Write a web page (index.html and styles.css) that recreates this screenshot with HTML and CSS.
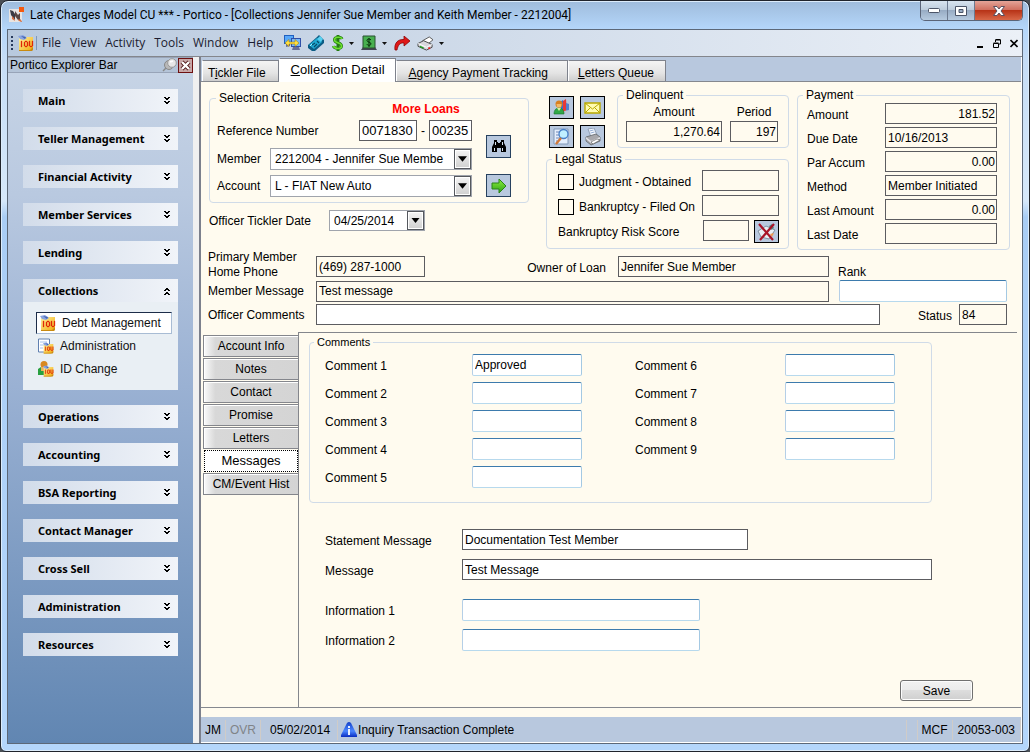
FILE: index.html
```html
<!DOCTYPE html>
<html lang="en">
<head>
<meta charset="utf-8">
<title>Portico - Collections</title>
<link rel="stylesheet" href="styles.css">
</head>
<body>
<svg class="defs" aria-hidden="true">
  <defs>
    <linearGradient id="gold" x1="0" y1="0" x2="1" y2="1"><stop offset="0" stop-color="#fff3a0"/><stop offset="1" stop-color="#f0a808"/></linearGradient>
    <linearGradient id="alert" x1="0" y1="0" x2="0" y2="1"><stop offset="0" stop-color="#1440c8"/><stop offset=".6" stop-color="#4a86ff"/><stop offset="1" stop-color="#0a2cc0"/></linearGradient>
    <linearGradient id="lime" x1="0" y1="0" x2="0" y2="1"><stop offset="0" stop-color="#8cf03c"/><stop offset="1" stop-color="#2ea018"/></linearGradient>
    <symbol id="down" viewBox="0 0 6 8"><path d="M0 0h2v1h2V0h2v1H5v1H4v1H2V2H1V1H0zM0 4h2v1h2V4h2v1H5v1H4v1H2V6H1V5H0z" fill="#000"/></symbol>
    <symbol id="iou" viewBox="0 0 16 16"><path d="M1 2h14v11l-3 3H1z" fill="url(#gold)"/><path d="M1 15h11l3-3v3l-1 1H1z" fill="#c88a10"/><path d="M0 1l5-1 4 3-3 2-4-1z" fill="#8aa4e0"/><path d="M3 1l5 1-1 2z" fill="#4464b0"/><path d="M3 6h1v6H3zM7 6h2v1H7zM6 7h1v4H6zM9 7h1v4H9zM7 11h2v1H7zM11 6h1v5h-1zM14 6h1v5h-1zM12 11h2v1h-2z" fill="#e02808" stroke="#e02808" stroke-width=".3"/></symbol>
    <symbol id="printer" viewBox="0 0 18 18"><path d="M4 1l6-1 3 7-6 2z" fill="#f4f8ff" stroke="#8090a8" stroke-width=".8"/><path d="M5.500 3l4-1M6.500 5l4-1" stroke="#7090c0" stroke-width=".7"/><path d="M2 9l10-3 4 3v4l-9 4-5-4z" fill="#a8a8ac" stroke="#606468" stroke-width=".8"/><path d="M2 9l5 4 9-4v2l-9 4-5-4z" fill="#e2e2e6"/><path d="M7 14l6-3 3 1-7 4z" fill="#fff" stroke="#555" stroke-width=".6"/></symbol>
    <symbol id="drop" viewBox="0 0 5 3"><path d="M0 0h5L2.500 3z" fill="#111"/></symbol>
    <symbol id="combo" viewBox="0 0 8 5"><path d="M0 0h8L4 5z" fill="#000"/></symbol>
  </defs>
</svg>
<div class="window">
  <header class="titlebar">
    <svg class="i16" viewBox="0 0 16 16"><path d="M1 2h13v13H1z" fill="#e8e4e2"/><path d="M2 3l3 1 2 3v6L5 11 3 8z" fill="#3c3b44"/><path d="M7 4l3 4 2-2v6l2 3-4-2-3-4z" fill="#5b4642"/><path d="M4 9l2 2 1 3-3-2zM10 12l3 1 1 2-3-1z" fill="#e07040"/><path d="M11 0h5v5h-5z" fill="#f45a10"/></svg>
    <h1>Late Charges Model CU *** - Portico - [Collections Jennifer Sue Member and Keith Member - 2212004]</h1>
    <div class="winbtns">
      <button class="wb" aria-label="Minimize"><svg width="12" height="6" viewBox="0 0 12 6"><rect x=".5" y=".5" width="11" height="4" rx="1" fill="#fff" stroke="#4c5568"/></svg></button>
      <button class="wb" aria-label="Maximize"><svg width="12" height="10" viewBox="0 0 12 10"><path fill-rule="evenodd" d="M.5.5h11v9H.5zM4 3.500h4v3H4z" fill="#fff" stroke="#4c5568"/></svg></button>
      <button class="wb close" aria-label="Close"><svg width="12" height="10" viewBox="0 0 12 10"><path d="M.5.500h3.500l2 2.500 2-2.500h3.500L8 5l3.500 4.500H8L6 7 4 9.500H.5L4 5z" fill="#fff" stroke="#5a5060"/></svg></button>
    </div>
  </header>
  <div class="client">
    <nav class="menubar">
      <span class="grip"></span>
      <svg class="i16"><use href="#iou"/></svg>
      <span class="rule"></span>
      <button>File</button><button>View</button><button>Activity</button><button>Tools</button><button>Window</button><button>Help</button>
      <div class="tools">
        <button aria-label="Connect"><svg width="17" height="16" viewBox="0 0 17 16"><path d="M0 0h10v9H0z" fill="#2060c0"/><path d="M1 1h8v7H1z" fill="#58a8f8"/><path d="M7 3h10v9H7z" fill="#3050a8"/><path d="M8 4h8v7H8z" fill="#78b8f8"/><path d="M2 9h4v2l-4 1zM9 12h6l1 3H8z" fill="#687098"/><path d="M1 8l4-3.500V7h6V4.500L15 8l-4 3.500V9H5v2.500z" fill="#ffe040" stroke="#987000" stroke-width=".5"/></svg></button>
        <button aria-label="Phone"><svg width="17" height="16" viewBox="0 0 17 16"><path d="M0 10L9 2l2-2 5 5v3L7 16H4L0 13z" fill="#0c5c84"/><path d="M1 10l8-7 5 4-8 7z" fill="#20a8d0"/><path d="M9 4l3-3 3 3-2 3z" fill="#58d0f0"/><path d="M4 10l3-2M6 12l3-3M9 6l2 2" stroke="#064868" stroke-width="1.200"/><path d="M2 11l2-2" stroke="#a0f0ff"/></svg></button>
        <button class="split" aria-label="Cash"><svg width="12" height="16" viewBox="0 0 12 16"><path d="M10 4C9 1.500 2.500 1.500 2.500 5S9.500 7 9.500 11 2 13.500 1.500 11M6 0v16" fill="none" stroke="#237c10" stroke-width="3"/><path d="M10 4C9 1.500 2.500 1.500 2.500 5S9.500 7 9.500 11 2 13.500 1.500 11" fill="none" stroke="#6ce030" stroke-width="1.600"/></svg><svg class="dd"><use href="#drop"/></svg></button>
        <button class="split" aria-label="Account"><svg width="16" height="16" viewBox="0 0 16 16"><path d="M0 15l2-3h12l2 3z" fill="#445"/><path d="M2 1h12v12H2z" fill="#48b050" stroke="#285030"/><path d="M10 5C9 3.500 6 3.500 6 5.500S10.500 7 10 9 6 10.500 6 9M8 3v9" fill="none" stroke="#062c08"/></svg><svg class="dd"><use href="#drop"/></svg></button>
        <button aria-label="Go"><svg width="16" height="15" viewBox="0 0 16 15"><path d="M1 14C0 7 4 3 10 3.500V0l6 5-6 5V7C6 6.500 4 9 3 14z" fill="#e01818" stroke="#8c0808" stroke-width=".8"/></svg></button>
        <button class="split" aria-label="Print"><svg width="17" height="15" viewBox="0 0 18 16"><path d="M6 5l7-4 4 3-6 5z" fill="#fff" stroke="#555"/><path d="M1 8l6-3 9 4v3l-6 3-9-4z" fill="#d8d8dc" stroke="#444"/><path d="M1 8l9 4 6-3" fill="none" stroke="#fff"/><path d="M3 11l4 2" stroke="#20a020" stroke-width="1.500"/><path d="M12 12h2v2h-2z" fill="#e02020"/></svg><svg class="dd"><use href="#drop"/></svg></button>
      </div>
      <div class="mdi">
        <button aria-label="Minimize form"><svg width="8" height="9" viewBox="0 0 8 9"><path d="M1 7h6v2H1z"/></svg></button>
        <button aria-label="Restore form"><svg width="8" height="9" viewBox="0 0 8 9"><path d="M2.500 3V1h5v4H6M2.500 .5h5M.5 4.500h5v4h-5zM.5 4h5" fill="none" stroke="#000"/></svg></button>
        <button aria-label="Close form"><svg width="8" height="9" viewBox="0 0 8 9"><path d="M.5 1l7 7M7.500 1l-7 7" stroke="#000" stroke-width="1.600"/></svg></button>
      </div>
    </nav>
    <div class="body">
      <aside class="explorer">
        <div class="exhead"><span>Portico Explorer Bar</span>
          <svg width="15" height="14" viewBox="0 0 15 14"><path d="M1 13l4-4" stroke="#888" stroke-width="1.500"/><circle cx="7" cy="7" r="4.500" fill="#b8b8b8" stroke="#888"/><circle cx="10" cy="5" r="4.300" fill="#e6e6e6" stroke="#999"/><path d="M8 4l3-1" stroke="#fff" stroke-width="1.500"/></svg>
          <button aria-label="Close explorer"><svg width="15" height="15" viewBox="0 0 15 15"><rect x=".5" y=".5" width="14" height="14" fill="#c8a8a8" stroke="#6e1010"/><path d="M4 4l7 7M11 4l-7 7" stroke="#501818" stroke-width="4"/><path d="M4 4l7 7M11 4l-7 7" stroke="#fff" stroke-width="2.400"/></svg></button>
        </div>
        <div class="groups">
          <button class="grp">Main<svg><use href="#down"/></svg></button>
          <button class="grp">Teller Management<svg><use href="#down"/></svg></button>
          <button class="grp">Financial Activity<svg><use href="#down"/></svg></button>
          <button class="grp">Member Services<svg><use href="#down"/></svg></button>
          <button class="grp">Lending<svg><use href="#down"/></svg></button>
          <div class="open">
            <button class="grp">Collections<svg class="flip"><use href="#down"/></svg></button>
            <div class="links">
              <a href="#" class="current"><svg class="i16"><use href="#iou"/></svg>Debt Management</a>
              <a href="#"><svg class="i16" viewBox="0 0 16 16"><path d="M.5 1h11v13H.5z" fill="#fff" stroke="#6080b0"/><path d="M2 4h7M2 7h4M2 10h3" stroke="#a8c4ec"/><svg x="5" y="4" width="11" height="12"><use href="#iou"/></svg></svg>Administration</a>
              <a href="#"><svg class="i16" viewBox="0 0 16 16"><path d="M0 14V8l3-2h5v8z" fill="#28a040"/><circle cx="6" cy="3.500" r="3.500" fill="#d88820"/><path d="M3 6h6v4H3z" fill="#e8b060"/><svg x="5" y="4" width="11" height="12"><use href="#iou"/></svg></svg>ID Change</a>
            </div>
          </div>
          <button class="grp">Operations<svg><use href="#down"/></svg></button>
          <button class="grp">Accounting<svg><use href="#down"/></svg></button>
          <button class="grp">BSA Reporting<svg><use href="#down"/></svg></button>
          <button class="grp">Contact Manager<svg><use href="#down"/></svg></button>
          <button class="grp">Cross Sell<svg><use href="#down"/></svg></button>
          <button class="grp">Administration<svg><use href="#down"/></svg></button>
          <button class="grp">Resources<svg><use href="#down"/></svg></button>
        </div>
      </aside>
      <main class="main">
        <div class="tabs">
          <button>T<u>i</u>ckler File</button>
          <button class="active"><u>C</u>ollection Detail</button>
          <button><u>A</u>gency Payment Tracking</button>
          <button><u>L</u>etters Queue</button>
        </div>
        <form class="page">
          <div class="top">
            <div class="left">
              <fieldset class="selection"><legend>Selection Criteria</legend>
                <div class="selwrap">
                  <div class="rows">
                    <strong class="more">More Loans</strong>
                    <div class="row ref"><label for="ref">Reference Number</label><input id="ref" class="big" value="0071830"><span>-</span><input class="big small" aria-label="Reference suffix" value="00235"></div>
                    <div class="row mem"><label for="mem">Member</label><span class="combo"><select id="mem"><option>2212004 - Jennifer Sue Membe</option></select><svg><use href="#combo"/></svg></span></div>
                    <div class="row acc"><label for="acc">Account</label><span class="combo"><select id="acc"><option>L - FIAT New Auto</option></select><svg><use href="#combo"/></svg></span></div>
                  </div>
                  <div class="side">
                    <button type="button" class="ib blue" aria-label="Find"><svg width="16" height="14" viewBox="0 0 16 14"><path d="M3 0h3v2h1v1h2V2h1V0h3v3l2 4v5h-5V8H6v4H1V7l2-4z" fill="#000"/><path d="M3 8h1v3H3zM11 8h1v3h-1zM4 2h1v3H4zM11 2h1v3h-1z" fill="#d8e4f0"/></svg></button>
                    <button type="button" class="ib blue" aria-label="Go to account"><svg width="16" height="16" viewBox="0 0 16 16"><path d="M1 5h7V1l7 7-7 7v-4H1z" fill="url(#lime)" stroke="#2a8418"/></svg></button>
                  </div>
                </div>
              </fieldset>
              <div class="row tick"><label for="tick">Officer Tickler Date</label><span class="combo date"><select id="tick"><option>04/25/2014</option></select><svg><use href="#combo"/></svg></span></div>
            </div>
            <div class="mid">
              <div class="midtop">
                <div class="icons">
                  <button type="button" class="ib" aria-label="Members"><svg width="17" height="17" viewBox="0 0 17 17"><path d="M7 3l3-2 1 12-4 1z" fill="#3870d0"/><path d="M10 2l3-2 1 13-4 1z" fill="#e83838"/><path d="M13 4l3 1v8l-3 1z" fill="#5080d0"/><path d="M11 12l5-1v3l-5 1z" fill="#b8c4d8"/><circle cx="6" cy="5" r="3.500" fill="#d88020"/><path d="M3.500 5h5l-1 5h-3z" fill="#f4b868"/><path d="M1 15c0-4 2-6 5-6s5 2 5 6z" fill="#30a848" stroke="#187030" stroke-width=".6"/><path d="M4 9l2 3 2-3z" fill="#d8f0a0"/></svg></button>
                  <button type="button" class="ib" aria-label="Mail"><svg width="17" height="12" viewBox="0 0 17 12"><path d="M1 1h15v10H1z" fill="#fffcb0" stroke="#b8a800" stroke-width="1.400"/><path d="M1 1l7.500 6L16 1M1 11l5-5M16 11l-5-5" fill="none" stroke="#b8a800"/></svg></button>
                  <button type="button" class="ib" aria-label="Search document"><svg width="17" height="17" viewBox="0 0 17 17"><path d="M1 1h14v15H1z" fill="#e4eefc" stroke="#8098b8"/><path d="M3 4h4M3 7h3M3 10h4M3 13h2" stroke="#7088b8"/><circle cx="10.500" cy="6" r="4.500" fill="#c0f0ff" stroke="#4880c8" stroke-width="1.300"/><path d="M8 10l-5 6" stroke="#d07838" stroke-width="2.400"/></svg></button>
                  <button type="button" class="ib" aria-label="Print form"><svg width="18" height="18"><use href="#printer"/></svg></button>
                </div>
                <fieldset class="delinq"><legend>Delinquent</legend>
                  <div class="pair"><label>Amount<input class="num ro" value="1,270.64" readonly></label><label class="per">Period<input class="num ro" value="197" readonly></label></div>
                </fieldset>
              </div>
              <fieldset class="legal"><legend>Legal Status</legend>
                <div class="row"><input type="checkbox" id="jud"><label for="jud">Judgment - Obtained</label><input class="ro" aria-label="Judgment date" readonly></div>
                <div class="row"><input type="checkbox" id="ban"><label for="ban">Bankruptcy - Filed On</label><input class="ro" aria-label="Bankruptcy date" readonly></div>
                <div class="row risk"><label for="risk">Bankruptcy Risk Score</label><input id="risk" class="ro" readonly><button type="button" class="ib" aria-label="Clear score"><svg width="19" height="18" viewBox="0 0 19 18"><path d="M1 8l8-5 9 4-6 9-8-2z" fill="#e8eef4" stroke="#8090a0"/><path d="M12 3l3-2 2 4-3 2z" fill="#508880"/><path d="M13 11l4-1-2 4z" fill="#f09850"/><path d="M2 1l14 16M17 1L3 17" stroke="#a81428" stroke-width="2.200"/></svg></button></div>
              </fieldset>
            </div>
            <fieldset class="payment"><legend>Payment</legend>
              <div class="row"><label for="p1">Amount</label><input id="p1" class="num ro" value="181.52" readonly></div>
              <div class="row"><label for="p2">Due Date</label><input id="p2" class="ro" value="10/16/2013" readonly></div>
              <div class="row"><label for="p3">Par Accum</label><input id="p3" class="num ro" value="0.00" readonly></div>
              <div class="row"><label for="p4">Method</label><input id="p4" class="ro" value="Member Initiated" readonly></div>
              <div class="row"><label for="p5">Last Amount</label><input id="p5" class="num ro" value="0.00" readonly></div>
              <div class="row"><label for="p6">Last Date</label><input id="p6" class="ro" readonly></div>
            </fieldset>
          </div>
          <div class="info">
            <div class="row r1"><label class="lead" for="phone">Primary Member<br>Home Phone</label><input id="phone" class="ro" value="(469) 287-1000" readonly><label class="owner" for="owner">Owner of Loan</label><input id="owner" class="ro" value="Jennifer Sue Member" readonly><label class="rankl" for="rank">Rank</label></div>
            <div class="row r2"><label class="lead" for="mm">Member Message</label><input id="mm" class="ro grow" value="Test message" readonly><input id="rank" class="soft"></div>
            <div class="row r3"><label class="lead" for="oc">Officer Comments</label><input id="oc" class="grow"><label class="statl" for="stat">Status</label><input id="stat" class="ro" value="84" readonly></div>
          </div>
          <div class="detail">
            <div class="vtabs">
              <button type="button">Account Info</button><button type="button">Notes</button><button type="button">Contact</button><button type="button">Promise</button><button type="button">Letters</button><button type="button" class="sel">Messages</button><button type="button">CM/Event Hist</button>
            </div>
            <div class="panel">
              <fieldset class="comments"><legend>Comments</legend>
                <div class="cgrid">
                  <div class="ccol">
                    <label for="c1">Comment 1</label><input id="c1" class="soft" value="Approved">
                    <label for="c2">Comment 2</label><input id="c2" class="soft">
                    <label for="c3">Comment 3</label><input id="c3" class="soft">
                    <label for="c4">Comment 4</label><input id="c4" class="soft">
                    <label for="c5">Comment 5</label><input id="c5" class="soft">
                  </div>
                  <div class="ccol second">
                    <label for="c6">Comment 6</label><input id="c6" class="soft">
                    <label for="c7">Comment 7</label><input id="c7" class="soft">
                    <label for="c8">Comment 8</label><input id="c8" class="soft">
                    <label for="c9">Comment 9</label><input id="c9" class="soft">
                  </div>
                </div>
              </fieldset>
              <div class="msgs">
                <div class="row"><label for="sm">Statement Message</label><input id="sm" class="w286" value="Documentation Test Member"></div>
                <div class="row"><label for="ms">Message</label><input id="ms" class="grow" value="Test Message"></div>
              </div>
              <div class="msgs more-info">
                <div class="row"><label for="i1">Information 1</label><input id="i1" class="soft"></div>
                <div class="row"><label for="i2">Information 2</label><input id="i2" class="soft"></div>
              </div>
              <button type="button" class="save">Save</button>
            </div>
          </div>
        </form>
        <footer class="status">
          <span>JM</span><span class="off">OVR</span><span class="day">05/02/2014</span>
          <span class="msg"><svg width="16" height="16" viewBox="0 0 16 16"><path d="M6 1q2-2 4 0l6 12v2H0v-2z" fill="url(#alert)"/><path d="M7 4h2v2H7zM7 7h2v6H7z" fill="#e8f0ff"/></svg>Inquiry Transaction Complete</span>
          <span class="blank"></span><span class="mcf">MCF</span><span class="term">20053-003</span>
        </footer>
      </main>
    </div>
  </div>
</div>
</body>
</html>
```
FILE: styles.css
```css
* { box-sizing: border-box; }
body { margin: 0; background: #4a4f55; font: 12px/14px "Liberation Sans", Arial, sans-serif; color: #000; }
button, input, select { font: inherit; color: inherit; margin: 0; padding: 0; border-radius: 0; }
button { background: none; border: 0; }
.defs { position: absolute; width: 0; height: 0; }
.i16 { width: 16px; height: 16px; flex: none; }

.window { min-height: 100vh; display: flex; flex-direction: column; padding: 0 6px 7px; border: 1px solid #20242c; border-radius: 8px 8px 6px 6px; background: linear-gradient(180deg, #9fbcdc 0, #b4d6fa 28px, #c6ddf6 60px, #d6e8fa 200px, #a9cdf5 216px, #b4d6fb 100%); box-shadow: inset 0 0 0 1px #dcecfb; }
.titlebar { height: 28px; display: flex; align-items: center; gap: 6px; padding-left: 1px; }
.titlebar h1 { flex: 1; margin: 0; font: 12px/18px Roboto, "Open Sans", sans-serif; white-space: nowrap; }
.winbtns { display: flex; align-self: flex-start; border: 1px solid #5a6478; border-top: 0; border-radius: 0 0 5px 5px; overflow: hidden; }
.wb { width: 27px; height: 19px; display: flex; align-items: center; justify-content: center; border-right: 1px solid #6c7a90; background: linear-gradient(#d8e4f0, #bccbdb 48%, #98acc4 50%, #b6cadf); }
.wb.close { width: 47px; border: 0; background: linear-gradient(#e4a498, #d07060 46%, #b83418 50%, #d86848); }

.client { flex: 1; display: flex; flex-direction: column; border: 1px solid #5c6878; background: #f0f0f0; }
.menubar { height: 27px; display: flex; align-items: center; background: linear-gradient(90deg, #b8c9de, #ebf0f7); border-bottom: 1px solid #84868c; padding: 0 4px 0 3px; font: 12px/16px "Open Sans", "Noto Sans", sans-serif; color: #1c1c30; }
.menubar > button { margin-right: 9px; }
.grip { width: 2px; height: 14px; margin-right: 5px; background: repeating-linear-gradient(#273a5c 0 2px, transparent 2px 4px); }
.rule { width: 1px; height: 14px; margin: 0 5px 0 2px; background: #8098b8; }
.tools { display: flex; align-items: center; gap: 7px; margin-left: 2px; }
.tools button { display: flex; align-items: center; }
.split { gap: 5px; }
.dd { width: 5px; height: 3px; }
.mdi { margin-left: auto; display: flex; gap: 9px; }
.mdi button { display: flex; }

.body { flex: 1; display: flex; }
.explorer { width: 185px; flex: none; background: linear-gradient(#c8d5e6, #b9c9e0 20%, #9ab1d3 48%, #6186b2); }
.exhead { height: 16px; display: flex; align-items: center; gap: 1px; padding-left: 2px; background: #b4c4d8; border: 1px solid #98a4b8; border-width: 1px 0; }
.exhead span { flex: 1; }
.exhead svg { display: block; }
.groups { display: flex; flex-direction: column; gap: 15px; padding: 16px 15px; }
.grp { width: 100%; height: 23px; flex: none; display: flex; align-items: center; justify-content: space-between; padding: 0 8px 0 15px; background: linear-gradient(90deg, #d2dcea, #f1f4f9); font: bold 11px/14px "Noto Sans", "Open Sans", sans-serif; }
.grp svg { width: 6px; height: 8px; }
.grp .flip { transform: rotate(180deg); }
.links { background: #e9eff4; padding: 10px 6px 8px 13px; height: 88px; }
.links a { display: flex; align-items: center; height: 23px; padding-left: 2px; gap: 6px; color: #111; text-decoration: none; }
.links a.current { height: 22px; padding-left: 3px; background: #fff; border: 1px solid #1c2c48; border-right-color: #a8bcd4; border-bottom-color: #a8bcd4; }

.main { flex: 1; min-width: 0; display: flex; flex-direction: column; margin-left: 6px; border-left: 2px solid #7c808c; border-right: 1px solid #fff; background: #fffbef; }
.tabs { height: 25px; display: flex; align-items: flex-end; background: #b8c8de; border-bottom: 1px solid #85888f; padding: 1px 1px 0; }
.tabs button { height: 21px; padding: 3px 19px 0 12px; border: 1px solid #7e828c; border-bottom: 0; border-left-color: #fff; background: linear-gradient(#f4f4f4, #e4e4e4 60%, #cdcdcd); white-space: nowrap; }
.tabs button:first-child { padding: 3px 12px 0 5px; }
.tabs button:last-child { padding: 3px 11px 0 9px; }
.tabs .active { height: 24px; padding: 0 10px 2px 11px; margin-bottom: -1px; background: #fff; font-size: 13px; }

.page { flex: 1; display: flex; flex-direction: column; border-bottom: 1px solid #85888f; }
.row { display: flex; align-items: center; }
.row label { white-space: nowrap; }
input:not([type="checkbox"]) { min-width: 0; height: 21px; padding: 0 2px; border: 1px solid #5c5c60; background: #fff; }
input.ro { background: #fffbef; }
input.num { text-align: right; padding: 0 1px 0 0; }
input.soft { height: 22px; border-color: #3d7bad #a4c9e3 #b7d9ed #b5cfe7; border-radius: 2px; }
input.grow { flex: 1; }
input[type="checkbox"] { appearance: none; width: 16px; height: 16px; border: 1px solid #000; background: #fffbef; }
fieldset { min-width: 0; margin: 0; padding: 0; border: 1px solid #d0dbe8; border-radius: 4px; }
legend { margin-left: 7px; padding: 0 3px; line-height: 8px; }

.top { display: grid; grid-template-columns: minmax(320px, 1fr) 252px 213px; gap: 8px; padding: 9px 12px 0 8px; }
.left { padding-top: 3px; }
.selection { height: 109px; }
.selection legend { margin-left: 6px; }
.selwrap { display: flex; padding-left: 7px; }
.rows { flex: 1; max-width: 255px; display: flex; flex-direction: column; }
.more { height: 14px; margin-left: 163px; width: 92px; text-align: center; color: #f00; }
.ref { margin-top: 4px; }
.ref label, .mem label, .acc label { flex: 1; }
.ref span { width: 12px; text-align: center; }
.ref .big { width: 58px; font-size: 13px; }
.ref .small { width: 43px; }
.mem { margin-top: 7px; }
.acc { margin-top: 5px; }
.combo { position: relative; width: 202px; height: 22px; display: block; }
.combo select { appearance: none; width: 100%; height: 100%; padding: 0 20px 0 4px; border: 1px solid #a0a4ac; background: #fff; }
.combo svg { position: absolute; right: 1px; top: 1px; width: 17px; height: 20px; padding: 6px 3px; border: 1px solid #55585e; background: linear-gradient(#f4f4f4, #d0d0d0); box-shadow: inset 0 0 0 1px #fff; pointer-events: none; }
.date { width: 96px; height: 21px; }
.date svg { height: 19px; }
.side { padding: 33px 0 0 14px; display: flex; flex-direction: column; gap: 16px; }
.ib { width: 25px; height: 23px; display: flex; align-items: center; justify-content: center; border: 1px solid #000; background: #b8c8de; }
.ib.blue { border-color: #27415f; }
.tick { margin-top: 7px; }
.tick label { width: 120px; }

.midtop { display: flex; padding-left: 12px; }
.icons { display: grid; grid-template-columns: 25px 25px; grid-auto-rows: 23px; gap: 6px; padding-top: 5px; }
.delinq { width: 172px; height: 57px; margin-left: 12px; }
.delinq legend { margin-left: 5px; }
.pair { display: flex; gap: 8px; padding: 6px 0 0 8px; }
.pair label { width: 96px; display: flex; flex-direction: column; gap: 2px; text-align: center; }
.pair .per { width: 48px; }
.legal { margin: 7px 0 0 9px; height: 94px; }
.legal legend { margin-left: 5px; }
.legal .row { height: 21px; margin: 0 9px 4px 11px; gap: 5px; }
.legal legend + .row { margin-top: 7px; }
.legal label { flex: 1; padding-top: 3px; }
.legal .row > input[type="checkbox"] { margin-top: 3px; }
.legal .ro { width: 77px; }
.legal .risk .ro { width: 46px; }
.risk .ib { align-self: flex-start; flex: none; }
.payment { height: 159px; padding: 0 12px 0 9px; }
.payment legend { margin-left: -4px; }
.payment .row { margin-bottom: 3px; }
.payment legend + .row { margin-top: 4px; }
.payment label { flex: 1; padding-top: 2px; }
.payment input { width: 112px; }

.info { padding: 0 14px 0 7px; display: flex; flex-direction: column; }
.lead { width: 108px; }
.r1 { height: 30px; line-height: 15px; }
.r1 #phone { width: 109px; margin-top: 3px; }
.owner { margin: 6px 12px 0 auto; }
.r1 #owner { width: 211px; margin-top: 3px; }
.rankl { width: 178px; padding: 14px 0 0 9px; }
.r2 #rank { width: 168px; margin-left: 10px; }
.r3 { margin-top: 2px; }
.statl { margin: 2px 7px 0 38px; }
.r3 #stat { width: 48px; }

.detail { flex: 1; display: flex; margin-top: 7px; padding-right: 4px; }
.vtabs { width: 97px; flex: none; padding: 3px 0 0 2px; display: flex; flex-direction: column; gap: 1px; }
.vtabs button { height: 22px; border: 1px solid #84868c; border-right: 0; background: linear-gradient(90deg, #fafafa, #d8d8d8 12%, #d4d4d4); box-shadow: inset 1px 1px 0 #fff; }
.vtabs .sel { margin: 0 0 0 1px; border: 1px dotted #000; background: #fff; font-size: 13px; box-shadow: none; }
.panel { flex: 1; min-width: 0; display: flex; flex-direction: column; border: 1px solid #84868c; border-width: 1px 0 0 1px; padding: 5px 85px 6px 10px; }
.comments { height: 165px; }
.comments legend { margin-left: 4px; font-size: 11px; }
.cgrid { display: flex; gap: 53px; padding: 8px 15px 0; }
.ccol { display: grid; grid-template-columns: 147px 110px; grid-auto-rows: 22px; row-gap: 6px; align-items: center; align-content: start; }
.ccol label { padding-top: 2px; }
.second { grid-template-columns: 150px 110px; }
.msgs { margin-top: 26px; padding-left: 16px; display: flex; flex-direction: column; gap: 9px; }
.msgs label { width: 137px; padding-top: 2px; }
.w286 { width: 286px; }
.more-info { margin-top: 19px; gap: 8px; }
.more-info input { width: 238px; }
.save { width: 73px; height: 21px; margin: 29px -41px 0 auto; border: 1px solid #707070; border-radius: 3px; background: linear-gradient(#f2f2f2, #ebebeb 48%, #dddddd 50%, #cfcfcf); box-shadow: inset 0 0 0 1px #fcfcfc; }

.status { height: 26px; margin-top: 9px; display: flex; align-items: center; background: #b8c8de; border-bottom: 1px solid #fff; padding: 2px 0; white-space: nowrap; }
.status span { height: 20px; display: flex; align-items: center; padding: 0 4px; border-right: 1px solid #d0ccc8; }
.status .off { color: #808488; }
.status .day { padding: 0 7px 0 9px; }
.status .msg { flex: 1; padding-left: 3px; gap: 1px; }
.status .blank { width: 11px; padding: 0; }
.status .term { padding: 0 5px; }
```
